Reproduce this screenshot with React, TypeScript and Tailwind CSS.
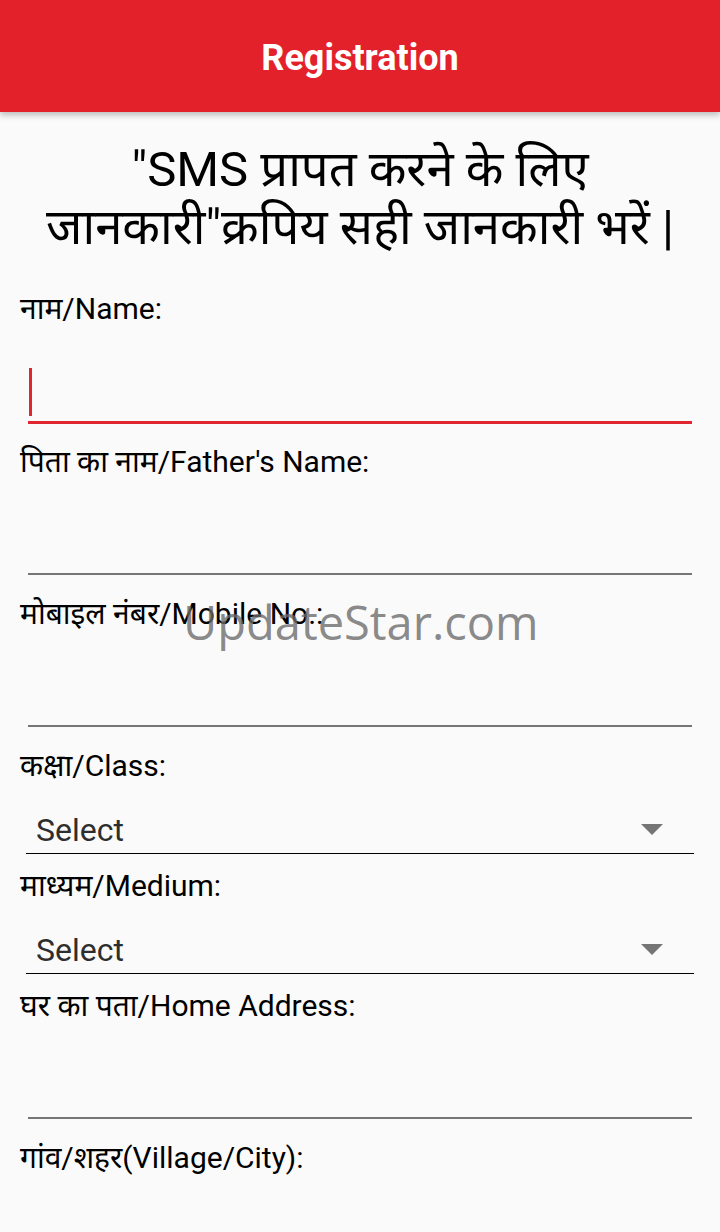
import { useState } from "react";

const font = { fontFamily: "Roboto, 'Noto Sans', sans-serif" };

// Text input with an underline, like the Android form
function TextField({ label, focused }: { label: string; focused?: boolean }) {
  return (
    <div className={focused ? "mb-[20px]" : "mb-[21px]"}>
      <div className="px-[20px] text-[30px] leading-[36px] text-black">{label}</div>
      <div
        className={`relative mx-[28px] ${
          focused ? "h-[97px] border-b-[3px] border-[#e0262f]" : "h-[95px] border-b-2 border-[#757575]"
        }`}
      >
        {focused && <div className="absolute left-[1px] top-[41px] h-[48px] w-[3px] bg-[#e0262f]" />}
      </div>
    </div>
  );
}

function SelectField({ label }: { label: string }) {
  return (
    <div className="mb-[14px]">
      <div className="px-[20px] text-[30px] leading-[36px] text-black">{label}</div>
      <div className="mx-[26px] flex h-[70px] items-end justify-between border-b border-black pb-[3px]">
        <span className="pl-[10px] text-[32px] leading-[40px] text-[#2e2e2e]">Select</span>
        <svg width="22" height="12" viewBox="0 0 22 12" className="mb-[14px] mr-[31px]">
          <path d="M0 0 L22 0 L11 11 Z" fill="#757575" />
        </svg>
      </div>
    </div>
  );
}

export default function App() {
  const [name] = useState("");

  return (
    <div className="relative min-h-[1232px] overflow-hidden bg-[#fafafa]" style={font}>
      {/* Toolbar */}
      <div className="flex h-[112px] items-center justify-center bg-[#e3212b] pt-[4px] shadow-[0_3px_6px_rgba(0,0,0,0.25)]">
        <h1 className="text-[36px] font-bold text-white">Registration</h1>
      </div>

      {/* Notice */}
      <div className="pt-[29px] text-center text-[49px] leading-[58px] text-black">
        "SMS प्रापत करने के लिए
        <br />
        जानकारी"क्रपिय सही जानकारी भरें |
      </div>

      <div className="mt-[34px]">
        <TextField label="नाम/Name:" focused={name === ""} />
        <TextField label="पिता का नाम/Father's Name:" />
        <TextField label="मोबाइल नंबर/Mobile No.:" />
        <SelectField label="कक्षा/Class:" />
        <SelectField label="माध्यम/Medium:" />
        <TextField label="घर का पता/Home Address:" />
        <div className="px-[20px] text-[30px] leading-[36px] text-black">गांव/शहर(Village/City):</div>
      </div>

      {/* watermark */}
      <div className="pointer-events-none absolute left-[183px] top-[590px] text-[47px] leading-[64px] text-[#6b6b6b]/80" style={{ fontFamily: "'Open Sans', sans-serif" }}>
        UpdateStar.com
      </div>
    </div>
  );
}
